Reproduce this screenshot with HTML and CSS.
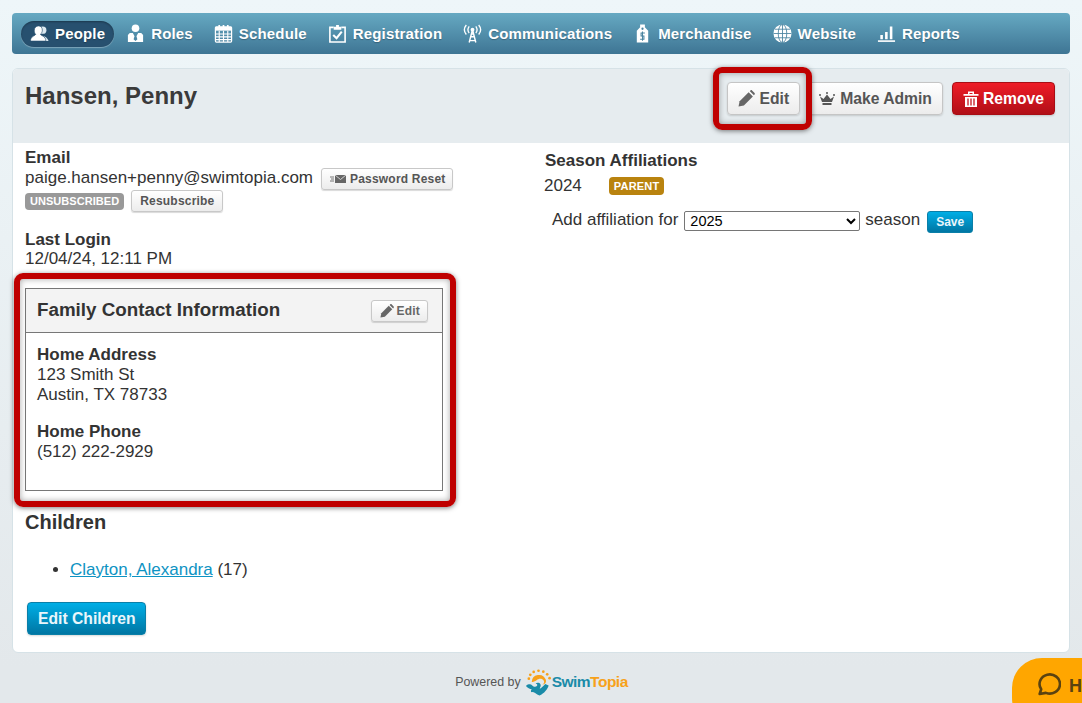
FILE: index.html
```html
<!DOCTYPE html>
<html lang="en">
<head>
<meta charset="utf-8">
<title>Hansen, Penny</title>
<link rel="stylesheet" href="styles.css">
</head>
<body>
<nav class="nav">
  <a class="nav-item active"><svg class="ni" viewBox="0 0 20 20"><circle cx="13.500" cy="6.500" r="3.800" fill="#dce9f0"/><path d="M9 13c3-1 9-.5 10.500 5H12z" fill="#dce9f0"/><path d="M9 2c2.500 0 4 2 4 4.500 0 2-1 3.500-2 4.300.3 1.200 3.500 1.700 5 4.200.5.800.6 1.800.6 3H.5c0-1.200.2-2.200.7-3 1.500-2.500 4.500-3 4.800-4.200C5 10 4.500 8.500 4.500 6.500 4.500 4 6.500 2 9 2z" fill="#fff" stroke="#27506f" stroke-width=".7"/></svg>People</a>
  <a class="nav-item"><svg class="ni" viewBox="0 0 20 20"><circle cx="10" cy="4.500" r="4" fill="#fff"/><path d="M2 19v-7.500L4 9.500h3.200L9 13l-1 3 2 2 2-2-1-3 1.800-3.500H16l2 2V19z" fill="#fff"/></svg>Roles</a>
  <a class="nav-item"><svg class="ni" viewBox="0 0 20 20"><rect x="1.500" y="3" width="17" height="16" rx="1" fill="none" stroke="#fff" stroke-width="1.300"/><path d="M1.500 3h17v4h-17z" fill="#fff"/><path d="M5.500 1v3M10 1v3M14.500 1v3" stroke="#fff" stroke-width="1.800"/><path d="M2 10.500h16M2 13.500h16M2 16.500h16M5.500 7v12M10 7v12M14.500 7v12" stroke="#fff" stroke-width="1.200"/></svg>Schedule</a>
  <a class="nav-item"><svg class="ni" viewBox="0 0 20 20"><path d="M6 3.500H2V19h16V3.500h-4" fill="none" stroke="#fff" stroke-width="1.700"/><path d="M6 6V3h2.500V1h3v2H14v3z" fill="#fff"/><path d="M5.500 11.500l3.500 3.500 5.500-7" fill="none" stroke="#fff" stroke-width="2.200"/></svg>Registration</a>
  <a class="nav-item"><svg class="ni" viewBox="0 0 20 20"><circle cx="10" cy="6" r="2" fill="#fff"/><path d="M10 6L6.500 19.500M10 6l3.500 13.500M8 13.500h4M6.800 17.500h6.400M8.600 10.500h2.800" stroke="#fff" stroke-width="1.500" fill="none"/><path d="M6.500 2.500c-1.600 2.200-1.600 5 0 7M13.500 2.500c1.600 2.200 1.600 5 0 7M3.500 1C1 4 1 8 3.500 11M16.500 1c2.500 3 2.500 7 0 10" stroke="#fff" stroke-width="1.400" fill="none"/></svg>Communications</a>
  <a class="nav-item"><svg class="ni" viewBox="0 0 20 20"><path d="M7.500 .5h5v2.800L16 7v12.500H4V7l3.500-3.700z" fill="#fff"/><circle cx="10" cy="5" r="1.200" fill="#4a84a0"/><path d="M12.500 9.500h-4v3.200h3v3.300h-4M10 8v9.500" fill="none" stroke="#4a84a0" stroke-width="1.100"/></svg>Merchandise</a>
  <a class="nav-item"><svg class="ni" viewBox="0 0 20 20"><circle cx="10" cy="10" r="9.500" fill="#fff"/><g fill="none" stroke="#4a84a0" stroke-width=".9"><ellipse cx="10" cy="10" rx="4.500" ry="9.500"/><path d="M10 .5v19M.5 10h19M2 5.500h16M2 14.500h16"/></g></svg>Website</a>
  <a class="nav-item"><svg class="ni" viewBox="0 0 20 20"><path d="M1 18h18" stroke="#fff" stroke-width="1.700"/><path d="M3.500 11.500h2.700V16H3.500zM8.500 8.500h2.700V16H8.500zM13.500 2.500h2.700V16h-2.700z" fill="#fff"/></svg>Reports</a>
</nav>

<main class="card">
  <header class="card-head">
    <h1 class="title">Hansen, Penny</h1>
    <div class="actions">
      <button class="btn btn-edit-main"><svg class="bi pencil-lg" viewBox="0 0 16 16"><path d="M.5 15.500l1-5L10 2l4 4-8.500 8.500z" fill="#666"/><path d="M11 1l.8-.6c.5-.4 1-.4 1.400 0l2.400 2.400c.4.400.4.900 0 1.400L15 5z" fill="#666"/></svg>Edit</button>
      <button class="btn"><svg class="bi" viewBox="0 0 16 16"><path d="M3 11L1 5.500 4.500 8 8 3.500 11.500 8 15 5.500 13 11z" fill="#555"/><path d="M3.500 13h9" stroke="#555" stroke-width="1.800"/><circle cx="1" cy="4" r="1" fill="#555"/><circle cx="8" cy="2" r="1" fill="#555"/><circle cx="15" cy="4" r="1" fill="#555"/></svg>Make Admin</button>
      <button class="btn btn-red"><svg class="bi" viewBox="0 0 16 16"><path d="M.5 3h15v1.800H.5zM5 .5h6v2.500H9.500V2h-3v1H5zM2 6h12v10H2z" fill="#fff"/><path d="M5 7.500v7M8 7.500v7M11 7.500v7" stroke="#c5141d" stroke-width="1.300"/></svg>Remove</button>
    </div>
  </header>
  <div class="columns">
    <section class="left">
      <div class="label">Email</div>
      <div class="email-row">paige.hansen+penny@swimtopia.com <button class="btn-sm btn-reset"><svg class="envelope" viewBox="0 0 16 10"><path d="M5 1h11v8H5z" fill="#666"/><path d="M5 1l5.500 4.500L16 1" stroke="#ddd" stroke-width=".9" fill="none"/><path d="M0 3h4M1 5h3M0 7h4" stroke="#666" stroke-width=".9" fill="none"/></svg>Password Reset</button></div>
      <div class="sub-row"><span class="tag grey">UNSUBSCRIBED</span><button class="btn-sm btn-resub">Resubscribe</button></div>
      <div class="label login">Last Login</div>
      <div>12/04/24, 12:11 PM</div>
      <div class="panel">
        <div class="panel-head">
          <h2 class="panel-title">Family Contact Information</h2>
          <button class="btn-sm btn-edit"><svg class="pencil" viewBox="0 0 16 16"><path d="M.5 15.500l1-5L10 2l4 4-8.500 8.500z" fill="#666"/><path d="M11 1l.8-.6c.5-.4 1-.4 1.400 0l2.400 2.400c.4.400.4.900 0 1.400L15 5z" fill="#666"/></svg>Edit</button>
        </div>
        <div class="panel-body">
          <div class="label field">Home Address</div>
          <div>123 Smith St</div>
          <div>Austin, TX 78733</div>
          <div class="label field phone">Home Phone</div>
          <div>(512) 222-2929</div>
        </div>
      </div>
      <h2 class="children">Children</h2>
      <ul class="child-list"><li><a class="link">Clayton, Alexandra</a> (17)</li></ul>
      <button class="btn btn-blue">Edit Children</button>
    </section>
    <section class="right">
      <div class="label">Season Affiliations</div>
      <div class="aff-row"><span class="year">2024</span><span class="tag gold">PARENT</span></div>
      <div class="add-row">Add affiliation for<select class="season"><option>2025</option></select>season<button class="btn-save">Save</button></div>
    </section>
  </div>
</main>

<footer class="footer">
  <span class="powered">Powered by</span>
  <svg class="logo" viewBox="0 0 28 28"><path d="M7 13.500a7.500 7.500 0 0 1 14.500-2.500c1 3-1 5.500-3.500 5 2 -.5 2.500-3 1-4.500-2-2-5-1.500-7 .2-1.500 1.200-3.500 1.800-5 1.800z" fill="#f7a11a"/><g fill="#f7a11a"><circle cx="4" cy="10" r="1.400"/><circle cx="5.500" cy="6" r="1.400"/><circle cx="9" cy="3" r="1.400"/><circle cx="14" cy="1.800" r="1.400"/><circle cx="19" cy="2.800" r="1.400"/><circle cx="23" cy="5.500" r="1.400"/><circle cx="25.500" cy="9.500" r="1.400"/></g><path d="M1 17.500c2.500-2 5-2 6.500-.5 1.500 1.800 4 1.800 5 .3.800-1.300-.5-2.300-1.500-2 1-1.500 4-1.500 5 .5 1 2.200-1 4-.5 4.700 2-1 4-3.500 5.500-5l3.500 1.500c-1 4-4.500 8-9.500 10.500-1.500-.5-3-1.500-4.500-2.500-1.500-1-2.500-1.500-4-1-.5-1-.5-2 .5-3-2-.2-4.500-1.500-6-3.500z" fill="#1a8ba8"/></svg>
  <span class="logo-text"><span class="swim">Swim</span><span class="topia">Topia</span></span>
</footer>

<div class="help"><svg class="chat" viewBox="0 0 24 24"><path d="M3.500 22l1.500-4.500A9.800 9.200 0 1 1 9.500 21z" fill="none" stroke="#5a4210" stroke-width="2.500" stroke-linejoin="round"/></svg><b>H</b></div>

<div class="mark mark-edit"></div>
<div class="mark mark-family"></div>
</body>
</html>
```
FILE: styles.css
```css
* { box-sizing: border-box; }
html, body { height: 100%; }
body {
  margin: 0;
  height: 703px;
  overflow: hidden;
  padding: 13px 12px 0;
  position: relative;
  background: linear-gradient(#eef6f9, #e3e8eb 95%);
  font: 17px/20px "Liberation Sans", Arial, sans-serif;
  color: #333;
}
.nav {
  display: flex;
  align-items: center;
  height: 41px;
  padding: 0 9px;
  gap: 21px;
  border-radius: 4px;
  background: linear-gradient(#66a9c2, #3e7594);
}
.nav-item {
  display: flex;
  align-items: center;
  gap: 6px;
  height: 26px;
  font-size: 15px;
  font-weight: bold;
  letter-spacing: .16px;
  color: #fff;
  text-shadow: 0 1px 1px rgba(0,0,0,.25);
}
.nav-item.active {
  margin-right: -9px;
  padding: 0 9px;
  border-radius: 13px;
  background: #27506f;
  box-shadow: 0 1px 1px rgba(255,255,255,.3), inset 0 1px 2px rgba(0,0,0,.3);
}
.ni { width: 19px; height: 19px; flex: none; }
.card {
  margin-top: 14px;
  height: 585px;
  background: #fff;
  border: 1px solid #d6e2e7;
  border-radius: 6px;
  overflow: hidden;
}
.card-head {
  display: flex;
  justify-content: space-between;
  height: 74px;
  padding: 13px 14px 0 12px;
  background: #e6ecef;
}
.title { margin: 0; font-size: 24px; line-height: 28px; font-weight: bold; color: #3a3a3a; }
.actions { display: flex; gap: 8px; align-items: flex-start; }
.btn {
  display: inline-flex;
  align-items: center;
  height: 33px;
  padding: 0 10px;
  gap: 5px;
  border: 1px solid #c5c5c5;
  border-radius: 4px;
  background: linear-gradient(#fff, #ececec);
  font: bold 15.7px "Liberation Sans", Arial, sans-serif;
  color: #555;
  box-shadow: 0 1px 2px rgba(0,0,0,.15);
}
.bi { width: 16px; height: 16px; flex: none; }
.pencil-lg { width: 17px; height: 17px; }
.btn-edit-main { gap: 4px; }
.btn-red {
  gap: 4px;
  margin-left: 1px;
  background: linear-gradient(#ee1c27, #b10f17);
  border-color: #a80e15;
  color: #fff;
}
.btn-blue {
  height: 33px;
  margin-left: 2px;
  padding: 0 9px 0 10px;
  background: linear-gradient(#00aee6, #0076a3);
  border-color: #0a7fa8;
  color: #eaf6fb;
}
.columns { display: grid; grid-template-columns: 532px 1fr; }
.left { padding: 4px 12px 0; }
.right { padding: 7px 0 0; }
.label { font-weight: bold; font-size: 17px; padding-top: 1px; margin-bottom: -1px; }
.field { margin-bottom: 0; }
.email-row { display: flex; align-items: center; gap: 8px; }
.btn-sm {
  display: inline-flex;
  align-items: center;
  height: 22px;
  padding: 0 7px;
  border: 1px solid #c8c8c8;
  border-radius: 3px;
  background: linear-gradient(#fff, #ececec);
  font: bold 12px "Liberation Sans", Arial, sans-serif;
  letter-spacing: .2px;
  color: #555;
  box-shadow: 0 1px 1px rgba(0,0,0,.15);
}
.btn-reset { padding: 0 6px 0 8px; margin: 1px 0 -1px; }
.btn-resub { padding: 0 8px; }
.envelope { width: 16px; height: 10px; margin-right: 4px; }
.sub-row { display: flex; align-items: center; gap: 7px; margin-top: 1px; height: 22px; }
.tag {
  display: inline-block;
  border-radius: 4px;
  font-size: 11px;
  line-height: 18px;
  font-weight: bold;
  color: #fff;
  padding: 0 5px;
  letter-spacing: .2px;
}
.grey { background: #999; line-height: 17px; letter-spacing: .05px; }
.gold { background: #b9830f; }
.login { margin-top: 17px; }
.panel {
  width: 418px;
  height: 203px;
  margin-top: 19px;
  border: 1px solid #777;
}
.panel-head {
  display: flex;
  align-items: center;
  justify-content: space-between;
  height: 44px;
  padding: 0 14px 0 11px;
  background: #f3f3f3;
  border-bottom: 1px solid #777;
}
.panel-title { margin: 0; padding-bottom: 2px; font-size: 18.8px; font-weight: bold; color: #333; }
.btn-edit { color: #666; padding: 0 7px 0 8px; }
.pencil { width: 14px; height: 14px; margin-right: 3px; }
.panel-body { padding: 11px 11px 0; }
.phone { margin-top: 16px; }
.children { margin: 19px 0 0; font-size: 20px; line-height: 24px; font-weight: bold; color: #333; }
.child-list { margin: 26px 0 0; padding-left: 45px; }
.link { color: #0e93c3; text-decoration: underline; }
.child-list + .btn { margin-top: 22px; }
.aff-row { display: flex; align-items: center; gap: 27px; margin-top: 6px; margin-left: -1px; height: 20px; }
.add-row { display: flex; align-items: center; margin: 13px 0 0 7px; height: 22px; }
.season {
  width: 176px;
  height: 20px;
  margin: 2px 5px 0 6px;
  padding: 0 1px;
  background: #fff;
  border: 1px solid #767676;
  border-radius: 2px;
  font: 14.5px "Liberation Sans", Arial, sans-serif;
  color: #000;
}
.btn-save {
  margin: 4px 0 0 7px;
  height: 22px;
  width: 46px;
  padding: 0;
  border: 1px solid #0a7fa8;
  border-radius: 3px;
  background: linear-gradient(#00aee6, #0076a3);
  font: bold 12px "Liberation Sans", Arial, sans-serif;
  color: #eaf6fb;
}
.footer {
  display: flex;
  align-items: center;
  justify-content: center;
  margin-top: 14px;
  height: 30px;
  padding-left: 1px;
}
.powered { font-size: 12.4px; color: #555; margin-right: 4px; }
.logo { width: 27px; height: 27px; }
.logo-text { font-size: 15.5px; font-weight: bold; letter-spacing: -.5px; }
.swim { color: #1a8ba8; }
.topia { color: #f7a11a; }
.help {
  position: absolute;
  left: 1012px;
  top: 658px;
  width: 100px;
  height: 70px;
  display: flex;
  align-items: flex-start;
  padding: 13px 0 0 24px;
  gap: 8px;
  background: #ffa600;
  border-radius: 30px;
  color: #5a4210;
  font-size: 18px;
}
.help b { margin-top: 5px; }
.chat { width: 25px; height: 25px; flex: none; }
.mark {
  position: absolute;
  border: 6px solid #bf0000;
  border-radius: 9px;
  box-shadow: 0 1px 5px rgba(0,0,0,.5), inset 0 0 6px rgba(0,0,0,.35);
}
.mark-edit { left: 713px; top: 67px; width: 99px; height: 63px; }
.mark-family { left: 14px; top: 273px; width: 442px; height: 234px; }
```
